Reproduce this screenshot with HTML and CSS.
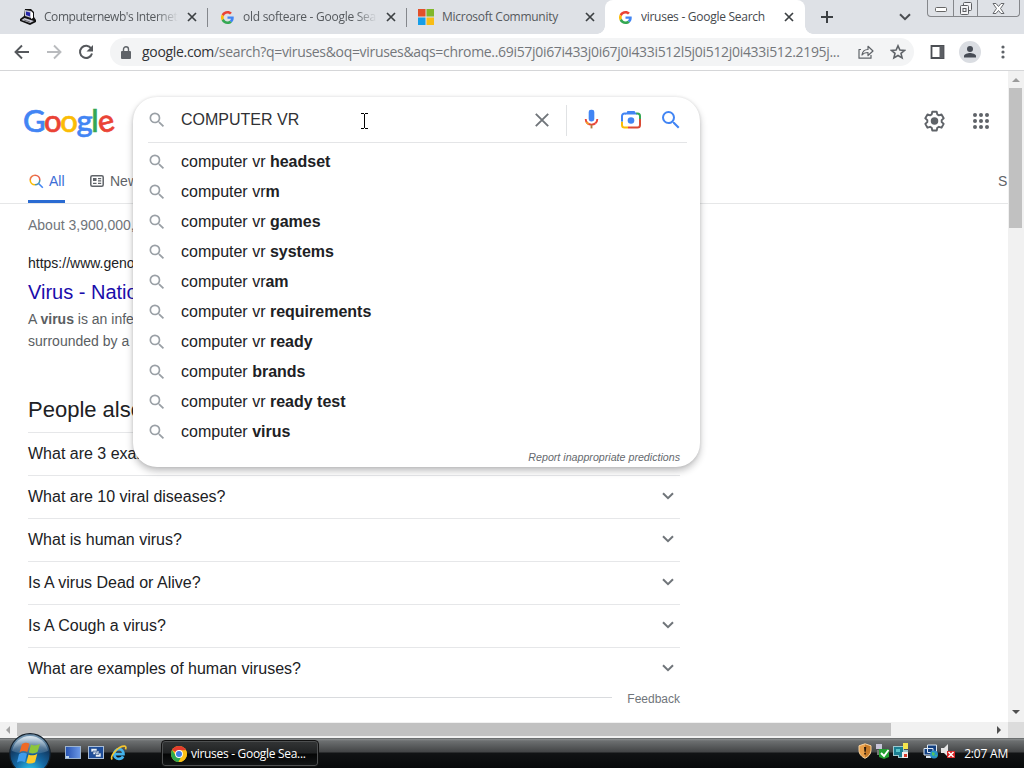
FILE: index.html
```html
<!DOCTYPE html>
<html lang="en">
<head>
<meta charset="utf-8">
<title>viruses - Google Search</title>
<link rel="stylesheet" href="styles.css">
</head>
<body>
<svg class="defs" width="0" height="0">
  <defs>
    <symbol id="g" viewBox="0 0 48 48">
      <path fill="#ea4335" d="M24 9.500c3.500 0 6.700 1.200 9.200 3.600l6.900-6.900C35.900 2.400 30.500 0 24 0 14.600 0 6.500 5.400 2.600 13.200l8 6.200C12.400 13.700 17.700 9.500 24 9.500z"/>
      <path fill="#4285f4" d="M47 24.600c0-1.600-.2-3.100-.4-4.600H24v9h12.900c-.6 3-2.200 5.500-4.800 7.200l7.700 6C44.400 38 47 31.800 47 24.600z"/>
      <path fill="#fbbc05" d="M10.500 28.600c-.5-1.500-.8-3-.8-4.600s.3-3.100.8-4.600l-8-6.200C.9 16.500 0 20.100 0 24s.9 7.500 2.600 10.800z"/>
      <path fill="#34a853" d="M24 48c6.500 0 11.900-2.100 15.900-5.800l-7.700-6c-2.200 1.500-4.900 2.300-8.200 2.300-6.300 0-11.600-4.200-13.500-9.900l-8 6.200C6.500 42.600 14.600 48 24 48z"/>
    </symbol>
    <symbol id="x" viewBox="0 0 10 10"><path d="M1 1l8 8M9 1L1 9" fill="none" stroke="#3c4043" stroke-width="1.700"/></symbol>
    <symbol id="mag" viewBox="0 0 24 24"><path fill="currentColor" d="M15.500 14h-.79l-.28-.27A6.470 6.470 0 0 0 16 9.500 6.500 6.500 0 1 0 9.500 16c1.610 0 3.090-.59 4.230-1.570l.27.28v.79l5 4.990L20.490 19l-4.990-5zm-6 0C7.010 14 5 11.990 5 9.500S7.010 5 9.500 5 14 7.010 14 9.500 11.990 14 9.500 14z"/></symbol>
    <symbol id="down" viewBox="0 0 12 8"><path d="M1 1.200l5 5 5-5" fill="none" stroke="currentColor" stroke-width="2"/></symbol>
  </defs>
</svg>

<header class="tabs">
  <div class="tab">
    <svg class="fav" viewBox="0 0 16 16"><path fill="#111" d="M5 0h6l3 3v5l2 3v2l-6 3-10-4v-2l4-3z"/><path fill="#c6c6d4" d="M5 1l6 1v7l-6-2zM1.500 11l3-2 9.500 3-4 2z"/><path fill="#fff" d="M11 2l2 2v5l-2 1z"/><path fill="#2525a8" d="M6 2.500l4 1v4l-4-1.500z"/><path stroke="#555" stroke-width=".8" d="M4 11l6 2"/></svg>
    <span class="name fade t1">Computernewb's Internet</span><svg class="close"><use href="#x"/></svg>
  </div>
  <div class="tab sep">
    <svg class="fav g"><use href="#g"/></svg>
    <span class="name fade t2">old softeare - Google Sea</span><svg class="close"><use href="#x"/></svg>
  </div>
  <div class="tab sep">
    <svg class="fav" viewBox="0 0 16 16"><path fill="#e2502a" d="M0 0h7.500v7.500H0z"/><path fill="#80b72a" d="M8.500 0H16v7.500H8.500z"/><path fill="#169ee8" d="M0 8.500h7.500V16H0z"/><path fill="#f8bd16" d="M8.500 8.500H16V16H8.500z"/></svg>
    <span class="name">Microsoft Community</span><svg class="close"><use href="#x"/></svg>
  </div>
  <div class="tab active">
    <svg class="fav g"><use href="#g"/></svg>
    <span class="name">viruses - Google Search</span><svg class="close"><use href="#x"/></svg>
  </div>
  <svg class="plus" viewBox="0 0 12 12"><path d="M6 0v12M0 6h12" stroke="#3c4043" stroke-width="2"/></svg>
  <svg class="tabmenu"><use href="#down"/></svg>
  <div class="win">
    <span class="wmin"><svg width="12" height="5" viewBox="0 0 12 5"><rect x=".5" y=".5" width="11" height="4" rx="1" fill="#fff" stroke="#666"/></svg></span>
    <span class="wmax"><svg width="14" height="13" viewBox="0 0 14 13"><g fill="#f4f4f6" stroke="#5c5e62"><rect x="4.500" y=".5" width="8" height="8" rx="1"/><rect x="1.500" y="3.500" width="8" height="9" rx="1"/><rect x="4" y="6.500" width="3" height="3"/></g></svg></span>
    <span class="wclose"><svg width="13" height="11" viewBox="0 0 13 11"><path d="M1 .5h3l2.500 3 2.500-3h3L8.500 5.500l3.500 5H9l-2.500-3-2.500 3H1l3.500-5z" fill="#fff" stroke="#66686c"/></svg></span>
  </div>
</header>

<nav class="toolbar">
  <svg class="nb" viewBox="0 0 16 16"><path d="M15 8H2M8 1.500L1.500 8 8 14.500" fill="none" stroke="#55585c" stroke-width="1.900"/></svg>
  <svg class="nb" viewBox="0 0 16 16"><path d="M1 8h13M8 1.500L14.500 8 8 14.500" fill="none" stroke="#b9bbbe" stroke-width="1.900"/></svg>
  <svg class="nb" viewBox="0 0 16 16"><path d="M13.200 4.500A6.100 6.100 0 1 0 14 9.500" fill="none" stroke="#55585c" stroke-width="2"/><path fill="#55585c" d="M15 1v6.500H8.500z"/></svg>
  <div class="omni">
    <svg class="lock" viewBox="0 0 10 13"><path fill="#5f6368" d="M1 5h8a1 1 0 0 1 1 1v6a1 1 0 0 1-1 1H1a1 1 0 0 1-1-1V6a1 1 0 0 1 1-1z"/><path d="M2.500 6V3.300a2.500 2.500 0 0 1 5 0V6" fill="none" stroke="#5f6368" stroke-width="1.400"/></svg>
    <span class="url"><b>google.com</b>/search?q=viruses&amp;oq=viruses&amp;aqs=chrome..69i57j0i67i433j0i67j0i433i512l5j0i512j0i433i512.2195j...</span>
    <svg class="share" viewBox="0 0 16 14"><path d="M3 4.500H1v8.700h12V10M4 10c.5-4 3-5.500 6-5.500V1.300L15 6l-5 4.500V7.500c-2.500 0-4.500.5-6 2.500z" fill="none" stroke="#5f6368" stroke-width="1.200" stroke-linejoin="round"/></svg>
    <svg class="star" viewBox="0 0 16 16"><path d="M8 1.800l1.900 4.200 4.600.4-3.500 3 1.100 4.500L8 11.500l-4.100 2.400L5 9.400l-3.500-3 4.600-.4z" fill="none" stroke="#5f6368" stroke-width="1.600"/></svg>
  </div>
  <svg class="side" viewBox="0 0 14 14"><path d="M1 1h12v12H1z" fill="none" stroke="#4c4f54" stroke-width="1.800"/><path fill="#5c5f64" d="M9 1h4v12H9z"/></svg>
  <svg class="avatar" viewBox="0 0 22 22"><circle cx="11" cy="11" r="11" fill="#dadde2"/><circle cx="11" cy="8" r="3" fill="#474c55"/><path fill="#474c55" d="M5 16.500v-1.500c0-2 4-3 6-3s6 1 6 3v1.500z"/></svg>
  <svg class="dots" viewBox="0 0 4 14"><g fill="#5f6368"><circle cx="2" cy="2" r="1.600"/><circle cx="2" cy="7" r="1.600"/><circle cx="2" cy="12" r="1.600"/></g></svg>
</nav>

<div class="view">
  <main class="page">
    <div class="top">
      <div class="logo"><i class="b">G</i><i class="r">o</i><i class="y">o</i><i class="b">g</i><i class="gr">l</i><i class="r e">e</i></div>
      <svg class="gear" viewBox="0 0 24 24"><path d="M9.700 2.800h4.600l.6 2.800 1.700 1 2.700-.9 2.300 4-2.100 1.900v2l2.100 1.900-2.300 4-2.700-.9-1.700 1-.6 2.800H9.700l-.6-2.800-1.700-1-2.700.9-2.300-4 2.100-1.900v-2L2.400 9.700l2.300-4 2.700.9 1.700-1z" fill="none" stroke="#5f6368" stroke-width="2" stroke-linejoin="round"/><circle cx="12" cy="12.600" r="3.900" fill="#5f6368"/></svg>
      <svg class="apps" viewBox="0 0 16 16"><g fill="#5f6368"><circle cx="2" cy="2" r="2"/><circle cx="8" cy="2" r="2"/><circle cx="14" cy="2" r="2"/><circle cx="2" cy="8" r="2"/><circle cx="8" cy="8" r="2"/><circle cx="14" cy="8" r="2"/><circle cx="2" cy="14" r="2"/><circle cx="8" cy="14" r="2"/><circle cx="14" cy="14" r="2"/></g></svg>
    </div>
    <div class="modes">
      <span class="mode on"><svg width="15" height="15" viewBox="0 0 15 15"><g fill="none" stroke-width="1.600"><path d="M1.200 6A4.800 4.800 0 0 1 6 1.200" stroke="#ee7a4a"/><path d="M6 1.200A4.800 4.800 0 0 1 10.800 6" stroke="#e8604c"/><path d="M1.200 6A4.800 4.800 0 0 0 6 10.800" stroke="#fbbc04"/><path d="M6 10.800A4.800 4.800 0 0 0 10.800 6" stroke="#4f96a0"/><path d="M9.300 9.300l4.500 4.500" stroke="#4285f4"/></g></svg>All</span>
      <span class="mode news"><svg width="14" height="12" viewBox="0 0 14 12"><rect x=".8" y=".8" width="12.400" height="10.400" rx="1.500" fill="none" stroke="#5f6368" stroke-width="1.500"/><path fill="#5f6368" d="M3 3h3.500v3H3zM8 3h3.200v1.200H8zM8 5.200h3.200v1.200H8zM3 7.800h3.500V9H3zM8 7.800h3.200V9H8z"/></svg>News</span>
      <span class="safe">S</span>
    </div>
    <div class="stats">About 3,900,000,</div>
    <article class="result">
      <cite>https://www.genom</cite>
      <h3>Virus - Natio</h3>
      <p>A <b>virus</b> is an infec<br>surrounded by a</p>
    </article>
    <section class="paa">
      <h2>People also</h2>
      <div class="q">What are 3 exam<svg><use href="#down"/></svg></div>
      <div class="q">What are 10 viral diseases?<svg><use href="#down"/></svg></div>
      <div class="q">What is human virus?<svg><use href="#down"/></svg></div>
      <div class="q">Is A virus Dead or Alive?<svg><use href="#down"/></svg></div>
      <div class="q">Is A Cough a virus?<svg><use href="#down"/></svg></div>
      <div class="q">What are examples of human viruses?<svg><use href="#down"/></svg></div>
      <div class="fb"><hr><span>Feedback</span></div>
    </section>
    <div class="suggest">
      <div class="field">
        <svg class="m"><use href="#mag"/></svg><span class="typed">COMPUTER VR</span>
        <svg class="clear" viewBox="0 0 14 14"><path d="M.8.8l12.400 12.400M13.200.8L.8 13.200" stroke="#70757a" stroke-width="1.900"/></svg>
        <svg class="mic" viewBox="0 0 16 21"><rect x="5" y="0" width="6" height="12.500" rx="2.500" fill="#4285f4"/><g fill="none" stroke-width="2"><path d="M1.800 10c0 2 .8 3.500 2 4.500" stroke="#ea4335"/><path d="M3.800 14.500c2 2 6.400 2 8.400 0" stroke="#ea4335"/><path d="M12.200 14.500c1.200-1 2-2.500 2-4.500" stroke="#ea4335"/><path d="M8 16v4" stroke="#b07a3c"/><path d="M2.500 13c.5 1.200 1.500 2 2.500 2.500" stroke="#f29d2c"/></g></svg>
        <svg class="lens" viewBox="0 0 20 19"><g fill="none" stroke-width="2"><path d="M1 9V6a2.500 2.500 0 0 1 2.500-2.500H5" stroke="#4285f4"/><path d="M15 3.500h1.500A2.500 2.500 0 0 1 19 6v3" stroke="#34a853"/><path d="M19 9v6a2.500 2.500 0 0 1-2.500 2.500H10" stroke="#d94b35"/><path d="M10 17.500H7" stroke="#ea4335"/><path d="M7 17.500H3.500A2.500 2.500 0 0 1 1 15v-3.500" stroke="#fbbc04"/><path d="M1 11.500V7" stroke="#4285f4"/></g><path fill="#4285f4" d="M4 4.500l2.500-3.500h7L16 4.500z"/><circle cx="10" cy="10.500" r="3.300" fill="#4285f4"/></svg>
        <svg class="go"><use href="#mag"/></svg>
      </div>
      <ul>
        <li><svg class="m"><use href="#mag"/></svg><span>computer vr <b>headset</b></span></li>
        <li><svg class="m"><use href="#mag"/></svg><span>computer vr<b>m</b></span></li>
        <li><svg class="m"><use href="#mag"/></svg><span>computer vr <b>games</b></span></li>
        <li><svg class="m"><use href="#mag"/></svg><span>computer vr <b>systems</b></span></li>
        <li><svg class="m"><use href="#mag"/></svg><span>computer vr<b>am</b></span></li>
        <li><svg class="m"><use href="#mag"/></svg><span>computer vr <b>requirements</b></span></li>
        <li><svg class="m"><use href="#mag"/></svg><span>computer vr <b>ready</b></span></li>
        <li><svg class="m"><use href="#mag"/></svg><span>computer <b>brands</b></span></li>
        <li><svg class="m"><use href="#mag"/></svg><span>computer vr <b>ready test</b></span></li>
        <li><svg class="m"><use href="#mag"/></svg><span>computer <b>virus</b></span></li>
      </ul>
      <div class="report">Report inappropriate predictions</div>
    </div>
    <svg class="ibeam" viewBox="0 0 7 16"><path d="M0 .5h3M4 .5h3M3.500 1v14M0 15.500h3M4 15.500h3" stroke="#000"/></svg>
  </main>
  <div class="vs"><i class="up"></i><div class="vthumb"></div><i class="dn"></i></div>
  <div class="hs"><i class="lt"></i><div class="hthumb"></div><i class="rt"></i></div>
  <div class="corner"></div>
</div>

<footer class="taskbar">
  <svg class="orb" viewBox="0 0 42 42">
    <defs><radialGradient id="o" cx=".5" cy=".95" r=".85"><stop offset="0" stop-color="#2fd0f5"/><stop offset=".45" stop-color="#1468a4"/><stop offset=".8" stop-color="#123a62"/><stop offset="1" stop-color="#6d90ac"/></radialGradient><linearGradient id="s" x2="0" y2="1"><stop offset="0" stop-color="#e4edf4" stop-opacity=".95"/><stop offset="1" stop-color="#7fa2bf" stop-opacity=".25"/></linearGradient></defs>
    <circle cx="21" cy="21" r="20.300" fill="url(#o)" stroke="#14202c" stroke-width="1.200"/>
    <path fill="url(#s)" d="M3 18a18.300 18.300 0 0 1 36 0c-9 4-27 4-36 0z"/>
    <path fill="#ee6a26" d="M13 11c3-2 5.500-1.500 7.500-.3L18.300 19c-2.800-1.400-5-1.300-7.800.2z"/>
    <path fill="#8cc63a" d="M22 11.500c3 1.300 5.500 1.300 9-.8L28.500 19c-3 1.800-6 1.800-8.700.6z"/>
    <path fill="#3f9bea" d="M10 21c3-1.700 5.500-1.500 8-.2l-2.200 8.400c-2.800-1.500-5-1.400-7.800.2z"/>
    <path fill="#fcca2a" d="M19.500 21.500c3 1.300 5.700 1.200 8.800-.7L26 29.200c-3 1.800-6 1.800-8.700.5z"/>
  </svg>
  <div class="quick">
    <svg width="16" height="14" viewBox="0 0 16 14"><defs><linearGradient id="d"><stop offset="0" stop-color="#2450b0"/><stop offset="1" stop-color="#6d9ae8"/></linearGradient></defs><rect x=".5" y=".5" width="15" height="12" fill="url(#d)" stroke="#9db4cf"/><path fill="#b9d2ea" d="M1 10h3v2H1z"/></svg>
    <svg width="16" height="14" viewBox="0 0 16 14"><rect x=".5" y=".5" width="15" height="12" fill="#1d4d9a" stroke="#a9bdd6"/><g fill="#e8f1fb" stroke="#294f88" stroke-width=".6"><path d="M3 2.500h6v3.500H3zM5 5h6v3.500H5zM7.500 7h5.500v4H7.500z"/></g></svg>
    <svg class="ie" width="17" height="16" viewBox="0 0 18 17"><path d="M4.500 9.800h9.800c0-3.300-2-5.300-4.700-5.300-3 0-5.100 2.200-5.100 5.200 0 2.800 2 5 5 5 2.200 0 3.600-1 4.400-2.700" fill="none" stroke="#43b3ed" stroke-width="2.900"/><path d="M2.300 15.500C-.5 12 8.500.8 15.700 1.200c1.500.3 1.300 2 .7 3.400" fill="none" stroke="#f4c62f" stroke-width="1.800"/></svg>
  </div>
  <div class="task">
    <svg width="16" height="16" viewBox="0 0 16 16"><circle cx="8" cy="8" r="8" fill="#fbc116"/><path fill="#e33b2e" d="M8 8L1.100 4A8 8 0 0 1 14.900 4z"/><path fill="#2da94f" d="M1.100 4A8 8 0 0 0 7.500 16L11 9.500 5 10z"/><path fill="#fbc116" d="M8 4.200h6.900A8 8 0 0 1 7.500 16L11.400 10z"/><circle cx="8" cy="8" r="3.900" fill="#fff"/><circle cx="8" cy="8" r="3" fill="#3f7fe8"/></svg>
    <span>viruses - Google Sea...</span>
  </div>
  <div class="tray">
    <svg width="14" height="16" viewBox="0 0 14 16"><path fill="#e9a04a" stroke="#f7d3a0" d="M7 .8l6 2v4.500c0 4-3 6.700-6 8-3-1.300-6-4-6-8V2.800z"/><path fill="#c67a28" d="M7 1.500l5.300 1.800V7c0 3.500-2.300 6-5.300 7.500z"/><path fill="#2a1808" d="M6 4h2.200l-.4 4.700H6.400zM6.200 9.800h1.700v1.700H6.200z"/></svg>
    <svg width="15" height="16" viewBox="0 0 15 16"><path fill="#c8c4d8" d="M1 1h6v5H1z"/><path fill="#777" d="M2 7h3v5H2z"/><path fill="#23a032" d="M4 6h10v8l-5 2-5-2z"/><path d="M6 10l3 3 4.500-6" stroke="#fff" stroke-width="1.900" fill="none"/></svg>
    <svg width="16" height="16" viewBox="0 0 16 16"><path fill="#9dc9cf" d="M0 3h11v10H0zM5 7h10v8H5z"/><path fill="#1b7f92" d="M1 4h9v8H1zM6 9h5v5H6z"/><path fill="#58c4c8" d="M3 6h4v3H3z"/><path fill="#f5e44c" d="M10 0h5v6h-5z"/><path fill="#eee" d="M9 9h6v6H9z"/><path fill="#d83a2b" d="M11 11h3v3h-3z"/></svg>
    <svg class="net" width="15" height="15" viewBox="0 0 15 15"><path fill="#123f80" stroke="#dbe7f2" d="M4.500 1h9v7.500h-9zM1 4.500h9V11H1z"/><path fill="#dbe7f2" d="M3 12h5v2H3z"/><circle cx="11" cy="10.500" r="4" fill="#2590c9"/><path fill="#4fc460" d="M9 8l3 1-1 3-2-1zM12 11h2l-1 2z"/></svg>
    <svg width="15" height="15" viewBox="0 0 15 15"><path fill="#e5e5e5" d="M0 4h3l4-4v13L3 9H0z"/><path fill="#d92525" d="M6 7h8v7H6z"/><path d="M7.500 8l5 5M12.500 8l-5 5" stroke="#fff" stroke-width="1.500"/></svg>
    <span class="clock">2:07 AM</span>
  </div>
</footer>
</body>
</html>
```
FILE: styles.css
```css
* { box-sizing: border-box; }
body { margin: 0; width: 1024px; height: 768px; overflow: hidden; display: flex; flex-direction: column; background: #fff; font-family: "Liberation Sans", Arial, sans-serif; color: #202124; }
.defs { position: absolute; }
svg { flex: none; display: block; }

.tabs { height: 34px; flex: none; display: flex; background: #dee1e6; padding-left: 8px; font: 12px "Open Sans", "Noto Sans", sans-serif; color: #55595d; }
.tab { width: 199px; height: 34px; display: flex; align-items: center; padding: 0 10px 0 12px; position: relative; }
.tab.active { width: 200px; background: #fff; border-radius: 8px 8px 0 0; color: #45494d; padding-right: 11px; }
.tab.active::before, .tab.active::after { content: ""; position: absolute; bottom: 0; width: 8px; height: 8px; }
.tab.active::before { left: -8px; background: radial-gradient(circle at 0 0, transparent 7.5px, #fff 8px); }
.tab.active::after { right: -8px; background: radial-gradient(circle at 100% 0, transparent 7.5px, #fff 8px); }
.tab.sep::before { content: ""; position: absolute; left: 0; top: 8px; width: 1px; height: 19px; background: #84878c; }
.fav { width: 16px; height: 16px; margin-right: 8px; }
.fav.g { width: 13px; height: 13px; margin: 0 9px 0 2px; }
.name { flex: 1; overflow: hidden; white-space: nowrap; line-height: 18px; margin-right: 9px; letter-spacing: -.27px; }
.fade { -webkit-mask-image: linear-gradient(90deg, #000 84%, transparent 100%); mask-image: linear-gradient(90deg, #000 84%, transparent 100%); }
.name.t1 { letter-spacing: -.45px; }
.name.t2 { letter-spacing: -.27px; }
.close { width: 10px; height: 10px; }
.plus { width: 12px; height: 12px; margin: 11px 0 0 16px; }
.tabmenu { width: 12px; height: 8px; margin: 13px 16px 0 66px; color: #4a4d51; }
.win { width: 93px; height: 17px; border: 1px solid #85878b; border-top: 0; border-radius: 0 0 4px 4px; display: flex; }
.win span { display: flex; justify-content: center; align-items: center; }
.wmin { width: 25px; padding-top: 3px; }
.wmax { width: 25px; border-left: 1px solid #85878b; border-right: 1px solid #85878b; }
.wclose { flex: 1; }

.toolbar { height: 37px; flex: none; display: flex; align-items: center; padding-left: 14px; border-bottom: 1px solid #d5d6d8; background: #fff; }
.nb { width: 16px; height: 16px; margin-right: 16px; }
.omni { width: 804px; height: 28px; border-radius: 14px; background: #f3f4f5; display: flex; align-items: center; padding-left: 11px; }
.lock { width: 10px; height: 13px; }
.url { margin-left: 11px; width: 716px; white-space: nowrap; font: 14px/20px "Open Sans", "Noto Sans", sans-serif; letter-spacing: -.32px; color: #74777b; }
.url b { font-weight: 400; color: #303235; }
.share { width: 16px; height: 14px; }
.star { width: 16px; height: 16px; margin-left: 16px; }
.side { width: 15px; height: 14px; margin-left: 16px; }
.avatar { width: 22px; height: 22px; margin-left: 14px; }
.dots { width: 4px; height: 14px; margin-left: 20px; }

.view { height: 667px; flex: none; display: grid; grid-template: 651px 16px / 1008px 16px; }
.page { position: relative; overflow: hidden; background: #fff; }
.top { height: 91px; display: flex; padding: 0 19px 0 23px; }
.logo { flex: 1; padding-top: 25px; font: 500 31px/48px "Lato", sans-serif; letter-spacing: -1.4px; }
.logo i { font-style: normal; -webkit-text-stroke: .6px currentColor; }
.logo .e { display: inline-block; transform: rotate(-14deg); }
.b { color: #4285f4; } .r { color: #ea4335; } .y { color: #fbbc05; } .gr { color: #34a853; }
.gear { width: 23px; height: 23px; margin: 38px 0 0; }
.apps { width: 16px; height: 16px; margin: 42px 0 0 27px; }
.modes { height: 42px; border-bottom: 1px solid #e6e7e8; display: flex; align-items: flex-start; padding-left: 28px; font-size: 14px; color: #5f6368; }
.mode { display: flex; align-items: center; height: 38px; }
.mode.on { width: 37px; height: 41px; border-bottom: 3px solid #2a6bd2; color: #3c6ed6; gap: 5px; padding-left: 1px; }
.mode.news { margin-left: 25px; gap: 6px; }
.safe { margin-left: auto; width: 10px; line-height: 38px; }
.stats { padding: 13px 0 0 28px; font-size: 14px; line-height: 16px; height: 51px; color: #70757a; }
.result { padding-left: 28px; height: 139px; }
cite { display: block; font-style: normal; font-size: 14px; line-height: 16px; }
h3 { margin: 7px 0 2px; font-size: 20px; font-weight: 400; line-height: 28px; color: #1a0dab; }
p { margin: 0; font-size: 14px; line-height: 22px; color: #5a5e62; }
.paa { width: 652px; margin-left: 28px; }
h2 { margin: 0; height: 38px; font-size: 22px; line-height: 32px; font-weight: 400; }
.q { height: 43px; border-top: 1px solid #e6e7e9; display: flex; align-items: center; justify-content: space-between; font-size: 16px; padding-right: 6px; }
.q svg { width: 12px; height: 8px; margin-bottom: 2px; color: #70757a; }
.fb { display: flex; align-items: center; font-size: 12px; line-height: 15px; color: #70757a; gap: 15px; }
.fb span { padding-top: 2px; margin-bottom: -2px; }
hr { flex: 1; margin: 0; border: 0; border-top: 1px solid #d9dbde; }

.suggest { position: absolute; left: 133px; top: 26px; width: 567px; height: 370px; border-radius: 24px; background: #fff; box-shadow: 0 4px 7px rgba(32,33,36,.28), 0 0 3px rgba(32,33,36,.12); }
.field { margin: 0 13px 0 15px; height: 46px; border-bottom: 1px solid #e4e5e7; display: flex; align-items: center; }
.m { width: 20px; height: 20px; color: #9aa0a6; margin: 0 14px 0 -1px; }
.typed { width: 354px; font-size: 16px; color: #303134; }
.clear { width: 14px; height: 14px; }
.mic { width: 15px; height: 21px; margin-left: 35px; }
.lens { width: 20px; height: 19px; margin-left: 22px; }
.go { width: 24px; height: 24px; color: #4285f4; margin-left: 18px; }
.field::after { content: ""; position: absolute; left: 433px; top: 8px; width: 1px; height: 31px; background: #e0e2e4; }
ul { list-style: none; margin: 4px 0 0; padding: 0 0 0 15px; }
li { height: 30px; display: flex; align-items: center; font-size: 16px; }
.report { text-align: right; padding: 3px 20px 0 0; font-size: 10.67px; line-height: 14px; font-style: italic; color: #65696e; }
.ibeam { position: absolute; left: 361px; top: 42px; width: 7px; height: 16px; }

.vs { background: #f1f1f1; display: flex; flex-direction: column; align-items: center; }
.vs i, .hs i { width: 0; height: 0; flex: none; }
.up { border: 4px solid transparent; border-top: 0; border-bottom-color: #9b9b9b; margin-top: 7px; }
.vthumb { width: 13px; height: 140px; background: #c1c1c1; margin: 6px 1px 0 0; }
.dn { border: 4px solid transparent; border-bottom: 0; border-top-color: #4f4f4f; margin: auto 0 8px; }
.hs { background: #f1f1f1; display: flex; align-items: center; }
.lt { border: 4px solid transparent; border-left: 0; border-right-color: #a3a3a3; margin-left: 6px; }
.hthumb { width: 874px; height: 13px; background: #c1c1c1; margin: 0 0 1px 7px; }
.rt { border: 4px solid transparent; border-right: 0; border-left-color: #4f4f4f; margin: 0 7px 0 auto; }
.corner { background: #dcdcdc; }

.taskbar { height: 30px; flex: none; display: flex; align-items: center; position: relative; color: #fff; background: linear-gradient(#4b4e4f 0, #8b8e8f 1px, #6c6f70 3px, #434546 14px, #111314 15px, #07090a 100%); font: 12px "Open Sans", "Noto Sans", sans-serif; }
.orb { position: absolute; left: 9px; top: -5px; width: 42px; height: 42px; }
.quick { display: flex; align-items: center; gap: 7px; margin-left: 65px; }
.ie { margin-left: -1px; }
.task { width: 158px; height: 27px; margin: 1px 0 0 34px; border: 1px solid #111; border-radius: 4px; background: linear-gradient(#333536, #202223 48%, #050606 52%, #141617); box-shadow: inset 0 0 0 1px #4e5051; display: flex; align-items: center; padding-left: 9px; gap: 4px; }
.task span { letter-spacing: -.3px; white-space: nowrap; }
.tray { margin-left: auto; display: flex; align-items: center; padding: 0 16px 4px 0; gap: 3px; }
.net { margin-left: 11px; }
.clock { margin: 4px 0 0 5px; letter-spacing: -.2px; white-space: nowrap; }
```
